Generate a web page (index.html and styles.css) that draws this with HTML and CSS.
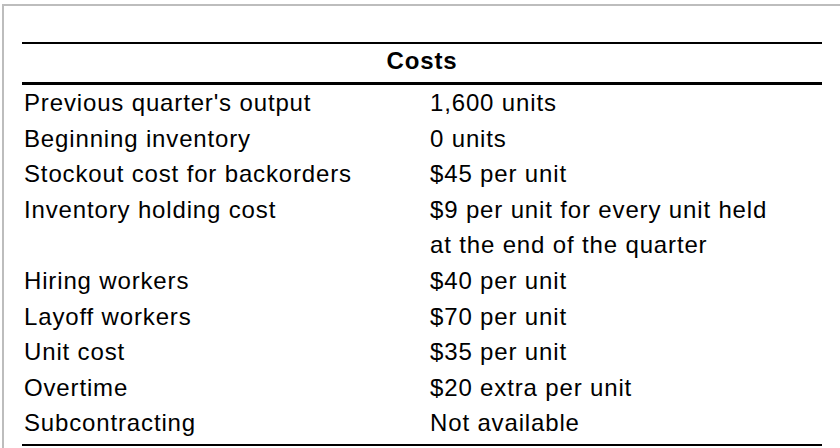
FILE: index.html
```html
<!DOCTYPE html>
<html>
<head>
<meta charset="utf-8">
<link rel="stylesheet" href="styles.css">
</head>
<body>
<div class="frame">
  <div class="costs">
    <div class="head">Costs</div>
    <div class="rows">
      <div class="label">Previous quarter's output</div><div class="value">1,600 units</div>
      <div class="label">Beginning inventory</div><div class="value">0 units</div>
      <div class="label">Stockout cost for backorders</div><div class="value">$45 per unit</div>
      <div class="label">Inventory holding cost</div><div class="value">$9 per unit for every unit held<br>at the end of the quarter</div>
      <div class="label">Hiring workers</div><div class="value">$40 per unit</div>
      <div class="label">Layoff workers</div><div class="value">$70 per unit</div>
      <div class="label">Unit cost</div><div class="value">$35 per unit</div>
      <div class="label">Overtime</div><div class="value">$20 extra per unit</div>
      <div class="label">Subcontracting</div><div class="value">Not available</div>
    </div>
  </div>
</div>
</body>
</html>
```
FILE: styles.css
```css
html, body {
  margin: 0;
  padding: 0;
  background: #fff;
  overflow: hidden;
}
body {
  width: 840px;
  height: 448px;
}
.frame {
  margin: 4px 0 0 2px;
  border-top: 2px solid #bdbdbd;
  border-left: 2px solid #bdbdbd;
  height: 460px;
  padding: 36px 0 0 18px;
  box-sizing: border-box;
  font-family: "Liberation Sans", Arial, Helvetica, sans-serif;
  font-size: 24px;
  letter-spacing: 0.85px;
  color: #000;
}
.costs {
  width: 800px;
  border-top: 2px solid #000;
  border-bottom: 2px solid #000;
}
.head {
  text-align: center;
  font-weight: bold;
  line-height: 34px;
  padding-bottom: 4px;
  border-bottom: 3px solid #000;
}
.rows {
  display: grid;
  grid-template-columns: 406px 1fr;
  line-height: 35.6px;
  padding-bottom: 3px;
}
.label, .value {
  padding-left: 2px;
}
```
